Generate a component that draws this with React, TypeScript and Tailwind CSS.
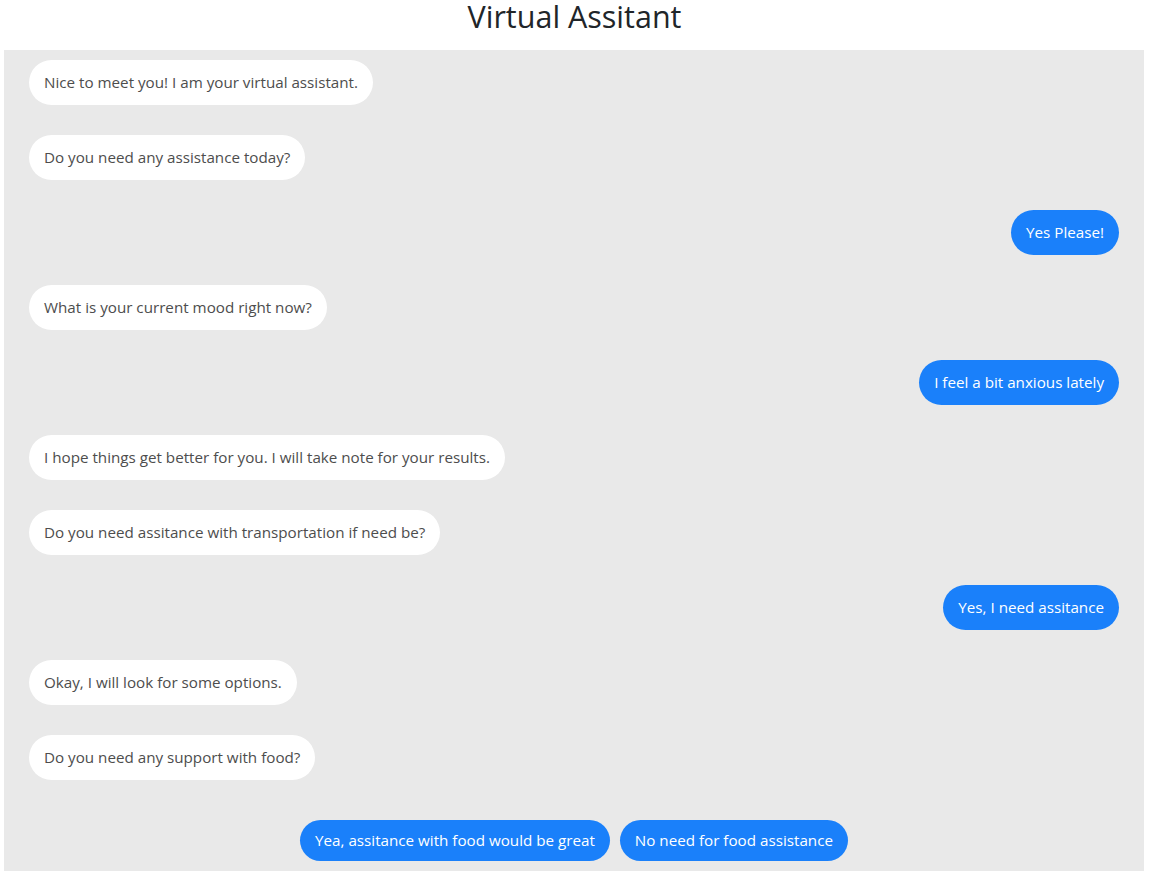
import React from "react";

type Msg = { from: "bot" | "user"; text: string };

const messages: Msg[] = [
  { from: "bot", text: "Nice to meet you! I am your virtual assistant." },
  { from: "bot", text: "Do you need any assistance today?" },
  { from: "user", text: "Yes Please!" },
  { from: "bot", text: "What is your current mood right now?" },
  { from: "user", text: "I feel a bit anxious lately" },
  { from: "bot", text: "I hope things get better for you. I will take note for your results." },
  { from: "bot", text: "Do you need assitance with transportation if need be?" },
  { from: "user", text: "Yes, I need assitance" },
  { from: "bot", text: "Okay, I will look for some options." },
  { from: "bot", text: "Do you need any support with food?" },
];

export default function App() {
  return (
    <div
      className="w-[1149px] h-[876px] bg-white"
      style={{ fontFamily: "'Open Sans', 'Noto Sans', sans-serif" }}
    >
      <h1 className="h-[50px] text-center text-[30.5px] leading-[32px] text-[#212529]">
        Virtual Assitant
      </h1>
      <div className="mx-[4px] w-[1140px] h-[821px] bg-[#e9e9e9] px-[25px] pt-[10px] flex flex-col gap-[30px]">
        {messages.map((m, i) => (
          <div
            key={i}
            className={m.from === "bot" ? "flex justify-start" : "flex justify-end"}
          >
            <div
              className={
                m.from === "bot"
                  ? "bg-white text-[#4d4d4d] rounded-full px-[15px] py-[12px] text-[15.2px] leading-[21px]"
                  : "bg-[#1a80fa] text-white rounded-full px-[15px] py-[12px] text-[15.2px] leading-[21px]"
              }
            >
              {m.text}
            </div>
          </div>
        ))}
        <div className="flex justify-center gap-[10px] mt-[10px]">
          <button className="bg-[#1a80fa] text-white rounded-full px-[15px] py-[10px] text-[15.2px] leading-[21px]">
            Yea, assitance with food would be great
          </button>
          <button className="bg-[#1a80fa] text-white rounded-full px-[15px] py-[10px] text-[15.2px] leading-[21px]">
            No need for food assistance
          </button>
        </div>
      </div>
    </div>
  );
}
